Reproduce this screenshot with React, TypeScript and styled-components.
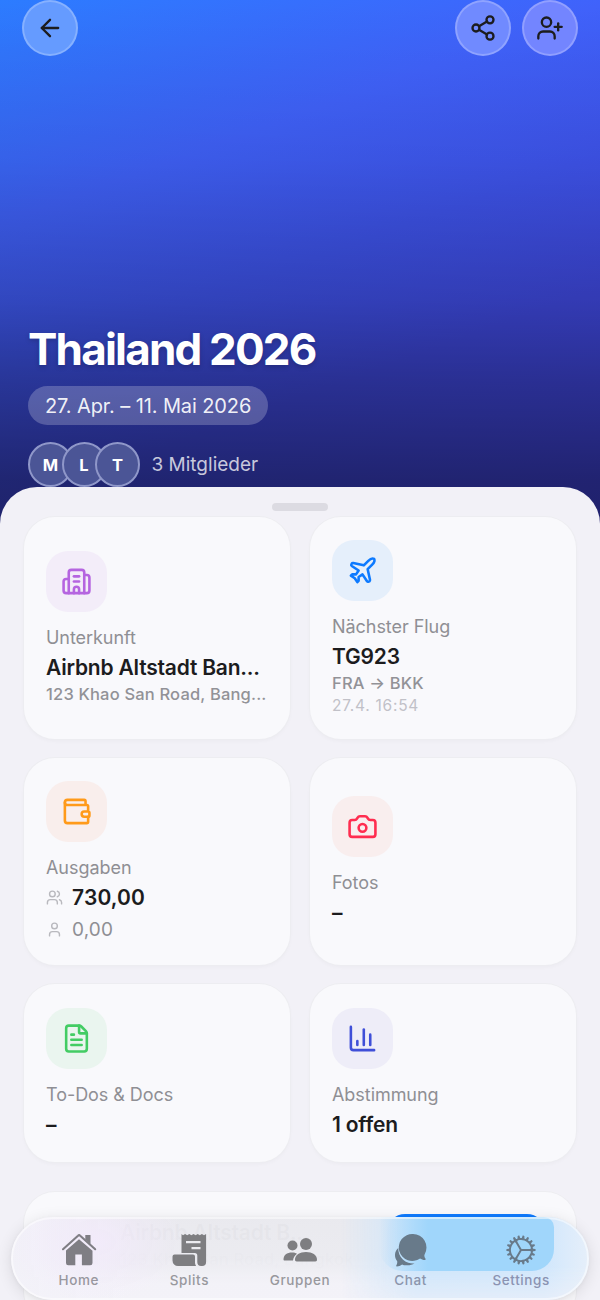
import React from 'react';
import styled, { createGlobalStyle } from 'styled-components';
import {
  ArrowLeft, Share2, UserPlus, Building2, Plane, Wallet, Camera, FileText, ChartColumn, Users, User,
} from 'lucide-react';
import { IoIosCog } from 'react-icons/io';

const GlobalStyle = createGlobalStyle`
  * { box-sizing: border-box; }
  body { margin: 0; background: #f2f1f7; font-family: Inter, "Liberation Sans", sans-serif; }
`;

const Screen = styled.div`
  position: relative;
  width: 600px;
  height: 1300px;
  overflow: hidden;
  background: #f2f1f7;
`;

const Hero = styled.header`
  height: 527px;
  display: flex;
  flex-direction: column;
  justify-content: space-between;
  background:
    linear-gradient(180deg, rgba(0,0,0,0) 0, rgba(0,0,0,.08) 160px, rgba(0,0,0,.22) 300px, rgba(0,0,0,.36) 380px, rgba(0,0,0,.51) 480px, rgba(0,0,0,.53) 527px),
    linear-gradient(160deg, #2c7cff 0%, #4062fb 30%, #3f55ef 50%, #414be6 68%, #4446e6 100%);
`;

const TopBar = styled.div`
  display: flex;
  gap: 11px;
  padding: 0 22px;
`;

const RoundButton = styled.button<{ $tint: string; $push?: boolean }>`
  width: 56px;
  height: 56px;
  margin-right: ${p => (p.$push ? 'auto' : '0')};
  padding: 0;
  display: flex;
  align-items: center;
  justify-content: center;
  border-radius: 50%;
  border: 2px solid rgba(255, 255, 255, .22);
  background: ${p => p.$tint};
  color: #1c1c1e;
`;

const TripInfo = styled.div`
  display: flex;
  flex-direction: column;
  align-items: flex-start;
  padding: 0 28px 40px;
`;

const Title = styled.h1`
  margin: 0;
  font-size: 44px;
  line-height: 54px;
  font-weight: 700;
  letter-spacing: -1.8px;
  color: #fff;
  text-shadow: 0 2px 5px rgba(0, 0, 0, .2);
`;

const DatePill = styled.div`
  height: 39px;
  margin-top: 10px;
  padding: 0 17px;
  display: flex;
  align-items: center;
  border-radius: 20px;
  background: rgba(255, 255, 255, .22);
  color: rgba(255, 255, 255, .93);
  font-size: 20px;
  letter-spacing: -.1px;
  white-space: nowrap;
`;

const Members = styled.div`
  display: flex;
  align-items: center;
  margin-top: 17px;
`;

const Avatar = styled.span`
  width: 45px;
  height: 45px;
  margin-right: -11.5px;
  display: flex;
  align-items: center;
  justify-content: center;
  border-radius: 50%;
  border: 2.5px solid #8f97c9;
  background: #4b5596;
  color: #fff;
  font-size: 16.5px;
  font-weight: 700;
`;

const MemberCount = styled.span`
  margin-left: 23px;
  color: rgba(255, 255, 255, .75);
  font-size: 19px;
  letter-spacing: 0;
`;

const Sheet = styled.main`
  position: relative;
  margin-top: -40px;
  height: 853px;
  padding: 16px 24px 0;
  border-radius: 37px 37px 0 0;
  background: #f2f1f7;
`;

const Handle = styled.div`
  width: 56px;
  height: 7.5px;
  margin: 0 auto 6.5px;
  border-radius: 4px;
  background: #dcdbe2;
`;

const Grid = styled.div`
  display: grid;
  grid-template-columns: 1fr 1fr;
  grid-template-rows: 222px 207px 178px;
  gap: 19px 20px;
`;

const Card = styled.section`
  min-width: 0;
  padding: 0 22px;
  display: flex;
  flex-direction: column;
  justify-content: center;
  border-radius: 31px;
  background: #f9f9fc;
  box-shadow: 0 0 0 1px #ededf1, 0 2px 4px rgba(0, 0, 0, .03);
`;

const IconTile = styled.div<{ $bg: string; $fg: string }>`
  width: 61px;
  height: 61px;
  flex: none;
  margin-bottom: 14px;
  display: flex;
  align-items: center;
  justify-content: center;
  border-radius: 22px;
  background: ${p => p.$bg};
  color: ${p => p.$fg};
`;

const Label = styled.div`
  line-height: 24px;
  font-size: 18px;
  letter-spacing: -.05px;
  color: #8f8f94;
`;

const Value = styled.div`
  line-height: 28px;
  margin-top: 4px;
  font-size: 21px;
  font-weight: 600;
  letter-spacing: -.2px;
  color: #1c1c1e;
  white-space: nowrap;
`;

const Detail = styled.div`
  line-height: 23px;
  margin-top: 1px;
  font-size: 16.5px;
  font-weight: 500;
  letter-spacing: .18px;
  color: #929297;
  white-space: nowrap;
`;

const Faint = styled.div`
  line-height: 20px;
  margin-top: 1px;
  font-size: 15.5px;
  letter-spacing: .75px;
  color: #c1c1c8;
`;

const Amount = styled.div<{ $muted?: boolean }>`
  display: flex;
  align-items: center;
  gap: 9px;
  height: ${p => (p.$muted ? '27px' : '28px')};
  margin-top: 4px;
  font-size: ${p => (p.$muted ? '19px' : '21px')};
  font-weight: ${p => (p.$muted ? 400 : 600)};
  letter-spacing: .15px;
  color: ${p => (p.$muted ? '#8f8f94' : '#1c1c1e')};
  svg { color: #b9b9be; }
`;

const StayCard = styled.section`
  height: 130px;
  margin-top: 30px;
  padding: 22px 31px 0 96px;
  display: flex;
  justify-content: space-between;
  border-radius: 31px;
  background: #f9f9fc;
  box-shadow: 0 0 0 1px #ededf1;
`;

const StayText = styled.div`
  padding-top: 1px;
`;

const NavigateButton = styled.button`
  width: 158px;
  height: 56px;
  padding: 0;
  border: 0;
  border-radius: 18px;
  background: #0f7bff;
  color: #fff;
  font: 600 19px Inter, sans-serif;
`;

const BarShadow = styled.div`
  position: absolute;
  left: 11px;
  top: 1217px;
  width: 578px;
  height: 83px;
  border-radius: 42px;
  box-shadow: 0 3px 16px rgba(0, 0, 0, .11), 0 1px 4px rgba(0, 0, 0, .04);
`;

const TabBar = styled.nav`
  position: absolute;
  left: 11px;
  top: 1217px;
  width: 578px;
  height: 83px;
  padding: 0 12.5px;
  display: grid;
  grid-template-columns: repeat(5, 1fr);
  overflow: hidden;
  border-radius: 42px;
  background:
    radial-gradient(ellipse 90px 60px at 85px 25px, rgba(243, 234, 252, .8), transparent),
    linear-gradient(90deg, rgba(243, 242, 249, .9) 20px, rgba(243, 242, 249, 0) 120px),
    linear-gradient(180deg, rgba(233, 233, 238, .98) 0, rgba(235, 235, 240, .98) 50%, rgba(243, 242, 248, .99) 80%);
  &::after {
    content: "";
    position: absolute;
    inset: 0;
    border-radius: 42px;
    border: 2px solid rgba(255, 255, 255, .5);
    pointer-events: none;
  }
`;

const BlueGlow = styled.div`
  position: absolute;
  left: 330px;
  top: 0;
  width: 248px;
  height: 83px;
  background: linear-gradient(90deg, rgba(207, 230, 251, 0), #cfe6fb 30%, #d1e7fc 82%, #e6effa);
  mask-image: linear-gradient(180deg, #000 60%, rgba(0, 0, 0, .45));
`;

const BlueCore = styled.div`
  position: absolute;
  left: 368px;
  top: 0;
  width: 175px;
  height: 54px;
  border-radius: 0 10px 22px 24px;
  background: linear-gradient(90deg, rgba(160, 214, 251, 0), #a0d6fb 28%);
`;

const Tab = styled.a<{ $tone: string; $text: string }>`
  position: relative;
  display: flex;
  flex-direction: column;
  align-items: center;
  padding-top: 15px;
  color: ${p => p.$tone};
  svg { display: block; }
  span {
    margin-top: 3px;
    line-height: 18px;
    font-size: 13.5px;
    font-weight: 500;
    letter-spacing: .6px;
    color: ${p => p.$text};
  }
`;

const HomeIcon = () => (
  <svg width="36" height="36" viewBox="0 0 36 36" fill="currentColor">
    <path d="M18 7.2 5 18.6V31a2.3 2.3 0 0 0 2.3 2.3h7V22.5h6.600v10.8h8.3A2.3 2.3 0 0 0 31.500 31V18.800Z" />
    <path d="m2 17.200 15-13.500a1.600 1.600 0 0 1 2.200 0l15 13.500" fill="none" stroke="currentColor" strokeWidth="2.100" strokeLinecap="round" />
    <path d="M24.300 3h5.200v9l-5.200-4.600Z" />
  </svg>
);

const SplitsIcon = () => (
  <svg width="36" height="36" viewBox="0 0 36 36" fill="currentColor">
    <path fillRule="evenodd" d="M10.500 2 12 3.200l2.100-1.200 2.100 1.200 2.100-1.200 2.100 1.200 2.100-1.200 2.100 1.200 2.100-1.200 2.100 1.200 2.100-1.200 2.100 1.200 2.100-1.200V30a4 4 0 0 1-4 4h-1a4 4 0 0 1-3.800-4v-6.500a2.500 2.500 0 0 0-2.500-2.500H10.500ZM15 9v2.200h14.500V9Zm5.500 6v2.200h9V15Z" />
    <path d="M3.500 22.500H22a2 2 0 0 1 2 2V30c0 1.600.4 3 1.200 4H7a5.500 5.500 0 0 1-5.500-5.500v-4a2 2 0 0 1 2-2Z" />
  </svg>
);

const GroupIcon = () => (
  <svg width="36" height="36" viewBox="0 0 36 36" fill="currentColor">
    <circle cx="10.500" cy="13.500" r="5" />
    <path d="M1.500 27.500C1.500 23 5 20.500 10 20.500c2 0 3.700.4 5 1.200-2.500 1.900-3.600 3.900-4 6.800H2.700c-.8 0-1.200-.3-1.200-1Z" />
    <circle cx="24" cy="12" r="6" />
    <path d="M13 27.800C13 23 17.700 20 24 20s11 3 11 7.800c0 1.200-.6 1.700-1.700 1.700H14.700c-1.100 0-1.700-.5-1.700-1.700Z" />
  </svg>
);

const ChatIcon = () => (
  <svg width="36" height="36" viewBox="0 0 36 36" fill="currentColor">
    <path d="M5.300 16A14.800 14.800 0 0 0 21.500 31.500c-2 1.300-4.700 1.900-8 1.800-1.800 0-3-.3-4.300-.9-1.700 1.300-3.500 2-5.400 2-.7 0-.8-.6-.4-1.100.8-1.300 1-2.400.8-4C2.700 27.300 2 25.500 2 23c0-3 1.500-5.500 3.300-7Z" />
    <path d="M20 2a13.500 13.500 0 0 1 11.700 20.200c-.7 1.300-.3 2.900.7 4.400.5.700.3 1.400-.5 1.400-1.900 0-3.500-.6-4.800-1.500A13.500 13.500 0 1 1 20 2Z" />
  </svg>
);

const App = () => (
  <Screen>
    <GlobalStyle />
    <Hero>
      <TopBar>
        <RoundButton $tint="#659bff" $push><ArrowLeft size={28} /></RoundButton>
        <RoundButton $tint="#708aff"><Share2 size={28} /></RoundButton>
        <RoundButton $tint="#7385ff"><UserPlus size={28} /></RoundButton>
      </TopBar>
      <TripInfo>
        <Title>Thailand 2026</Title>
        <DatePill>27. Apr. – 11. Mai 2026</DatePill>
        <Members>
          <Avatar>M</Avatar><Avatar>L</Avatar><Avatar>T</Avatar>
          <MemberCount>3 Mitglieder</MemberCount>
        </Members>
      </TripInfo>
    </Hero>
    <Sheet>
      <Handle />
      <Grid>
        <Card>
          <IconTile $bg="#f3edf9" $fg="#b565e0"><Building2 size={31} /></IconTile>
          <Label>Unterkunft</Label>
          <Value>Airbnb Altstadt Ban...</Value>
          <Detail>123 Khao San Road, Bang...</Detail>
        </Card>
        <Card>
          <IconTile $bg="#e5effb" $fg="#0d7aff"><Plane size={31} /></IconTile>
          <Label>Nächster Flug</Label>
          <Value>TG923</Value>
          <Detail>FRA → BKK</Detail>
          <Faint>27.4. 16:54</Faint>
        </Card>
        <Card>
          <IconTile $bg="#f9eeec" $fg="#ff9a1a"><Wallet size={31} /></IconTile>
          <Label>Ausgaben</Label>
          <Amount><Users size={17} />730,00</Amount>
          <Amount $muted><User size={17} />0,00</Amount>
        </Card>
        <Card>
          <IconTile $bg="#f9eeee" $fg="#ff2d50"><Camera size={31} /></IconTile>
          <Label>Fotos</Label>
          <Value>–</Value>
        </Card>
        <Card>
          <IconTile $bg="#eaf5ef" $fg="#43cc64"><FileText size={31} /></IconTile>
          <Label>To-Dos &amp; Docs</Label>
          <Value>–</Value>
        </Card>
        <Card>
          <IconTile $bg="#eeedf8" $fg="#3f4fd8"><ChartColumn size={31} /></IconTile>
          <Label>Abstimmung</Label>
          <Value>1 offen</Value>
        </Card>
      </Grid>
      <StayCard>
        <StayText>
          <Value>Airbnb Altstadt B...</Value>
          <Detail>123 Khao San Road, Bangkok</Detail>
        </StayText>
        <NavigateButton>Navigation</NavigateButton>
      </StayCard>
    </Sheet>
    <BarShadow />
    <TabBar>
      <BlueGlow />
      <BlueCore />
      <Tab $tone="#7f7e84" $text="#98979e"><HomeIcon /><span>Home</span></Tab>
      <Tab $tone="#7e7e81" $text="#98989d"><SplitsIcon /><span>Splits</span></Tab>
      <Tab $tone="#7e7e81" $text="#98989d"><GroupIcon /><span>Gruppen</span></Tab>
      <Tab $tone="#687a8a" $text="#8b95ac"><ChatIcon /><span>Chat</span></Tab>
      <Tab $tone="#687a8a" $text="#8b93b2"><IoIosCog size={36} /><span>Settings</span></Tab>
    </TabBar>
  </Screen>
);

export default App;
